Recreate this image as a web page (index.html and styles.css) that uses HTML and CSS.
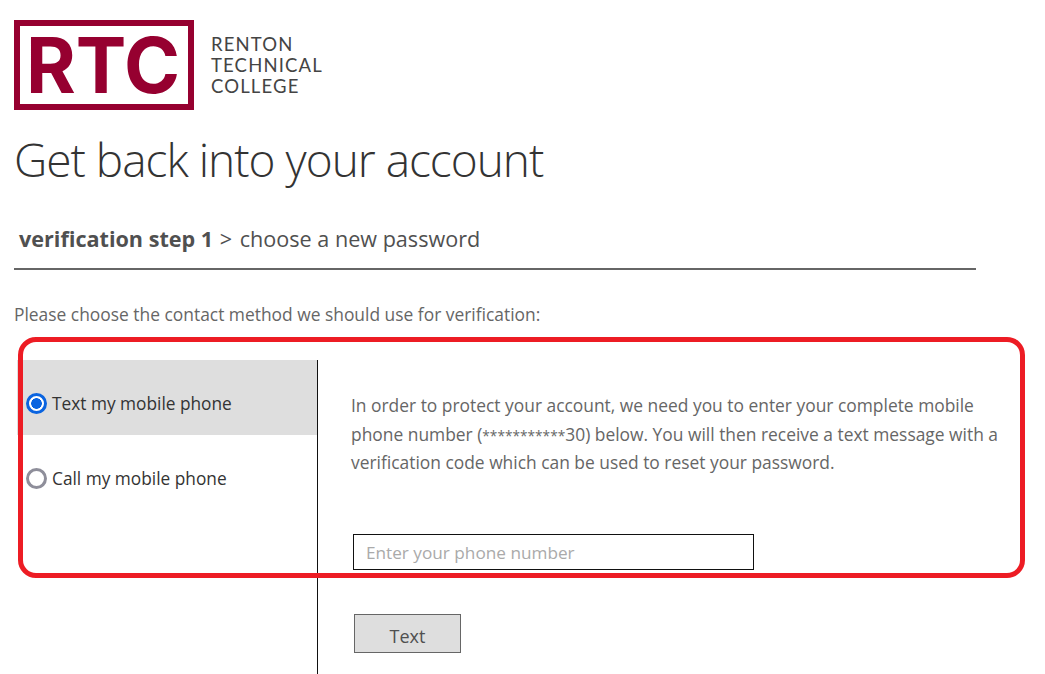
FILE: index.html
```html
<!DOCTYPE html>
<html lang="en">
<head>
<meta charset="utf-8">
<title>Get back into your account</title>
<link rel="stylesheet" href="styles.css">
</head>
<body>
<header class="brand">
  <svg class="brand-mark" width="180" height="90" viewBox="0 0 180 90" role="img" aria-label="RTC">
    <rect x="3" y="3" width="174" height="84" fill="#fff" stroke="#960030" stroke-width="6"/>
    <text x="12" y="73" class="brand-letters" textLength="154" lengthAdjust="spacingAndGlyphs">RTC</text>
  </svg>
  <div class="brand-name">RENTON<br>TECHNICAL<br>COLLEGE</div>
</header>
<h1 class="title">Get back into your account</h1>
<nav class="steps"><strong>verification step 1</strong> <span class="sep">&gt;</span> choose a new password</nav>
<p class="prompt">Please choose the contact method we should use for verification:</p>
<main class="panel">
  <div class="methods">
    <label class="method method-on"><span class="radio radio-on"></span>Text my mobile phone</label>
    <label class="method"><span class="radio"></span>Call my mobile phone</label>
  </div>
  <section class="detail">
    <p class="info">In order to protect your account, we need you to enter your complete mobile<br>phone number (<span class="mask">***********</span>30) below. You will then receive a text message with a<br>verification code which can be used to reset your password.</p>
    <input class="phone" type="text" placeholder="Enter your phone number">
    <button class="send" type="button">Text</button>
  </section>
  <div class="highlight"></div>
</main>
</body>
</html>
```
FILE: styles.css
```css
* { box-sizing: border-box; }
html, body { height: 100%; }
body {
  margin: 0;
  padding: 20px 0 0 14px;
  overflow: hidden;
  background: #fff;
  color: #505050;
  font-family: "Open Sans", "Noto Sans", "Liberation Sans", sans-serif;
}
.brand { display: flex; align-items: center; gap: 17px; height: 90px; }
.brand-mark { display: block; flex: none; overflow: visible; }
.brand-letters { font-family: "Inter", "Liberation Sans", sans-serif; font-weight: 700; font-size: 77px; fill: #960030; }
.brand-name { font-family: "Lato", sans-serif; font-size: 18.5px; line-height: 21px; color: #444; letter-spacing: 1.15px; margin-top: 1px; }
.title { margin: 19px 0 0; font-size: 46px; line-height: 60px; font-weight: 300; color: #333; letter-spacing: -1px; }
.steps {
  width: 962px;
  margin-top: 30px;
  padding: 0 0 8px 5px;
  height: 51px;
  line-height: 40px;
  border-bottom: 2px solid #666;
  font-size: 21.6px;
  color: #505050;
}
.steps strong { font-weight: 700; }
.sep { margin: 0 2px 0 1px; }
.prompt { margin: 32px 0 0; font-size: 17.4px; line-height: 24px; color: #666; }
.panel { position: relative; display: flex; margin: 34px 0 0 3px; height: 314px; }
.methods { width: 300px; flex: none; }
.method { display: flex; align-items: center; height: 75px; padding: 11px 0 0 9px; gap: 5px; font-size: 17.3px; color: #333; }
.method-on { background: #dedede; }
.radio { width: 21px; height: 21px; border-radius: 50%; border: 3px solid #8e8e9a; background: #fff; flex: none; }
.radio-on { border-color: #0a64e0; background: radial-gradient(circle, #0a64e0 0 5px, #fff 5.6px); }
.detail { border-left: 1px solid #111; padding: 31px 0 0 33px; flex: 1; }
.info { margin: 0; height: 86px; white-space: nowrap; font-size: 17.4px; line-height: 28.5px; color: #666; }
.mask { font-size: 13.7px; line-height: 1; }
.phone {
  display: block;
  margin: 57px 0 0 2px;
  width: 401px;
  height: 36px;
  padding: 0 12px;
  border: 1px solid #111;
  border-radius: 0;
  background: #fff;
  font: 17.2px "Open Sans", sans-serif;
}
.phone::placeholder { color: #aaa; opacity: 1; }
.send {
  display: block;
  margin: 44px 0 0 3px;
  width: 107px;
  height: 39px;
  padding: 4px 0 0;
  border: 1px solid #666;
  background: #dedede;
  color: #505050;
  font: 18px "Open Sans", sans-serif;
}
.highlight {
  position: absolute;
  left: 1px;
  top: -23px;
  width: 1007px;
  height: 241px;
  border: 5px solid #ed1c24;
  border-radius: 18px;
  pointer-events: none;
}
```
